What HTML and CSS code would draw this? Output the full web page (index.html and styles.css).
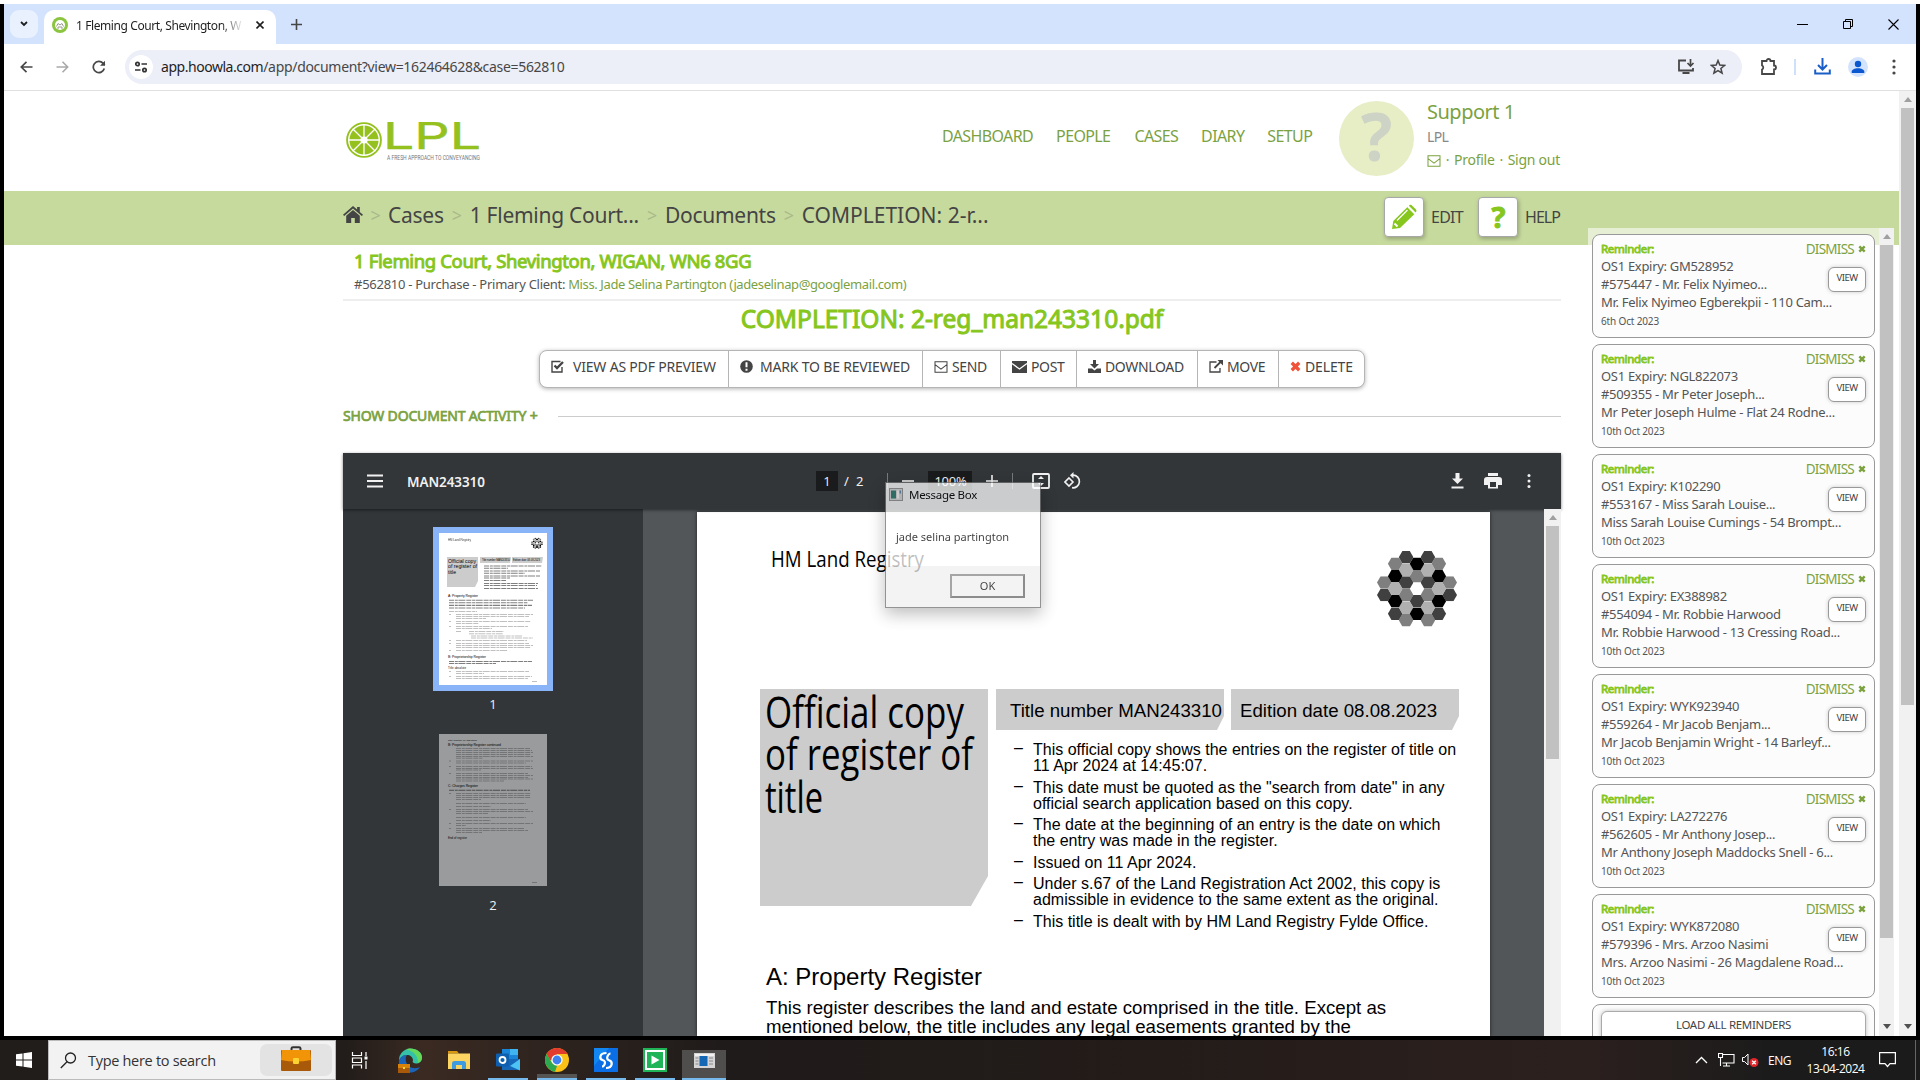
FILE: index.html
```html
<!DOCTYPE html>
<html lang="en">
<head>
<meta charset="utf-8">
<title>1 Fleming Court, Shevington, WIGAN</title>
<link rel="stylesheet" href="styles.css">
</head>
<body>
<svg width="0" height="0" class="defs">
  <symbol id="i-mail" viewBox="0 0 16 14"><path d="M1 1h14v12H1z M1.5 4.5 L8 9.5 L14.500 4.500" fill="none" stroke="currentColor" stroke-width="1.200"/></symbol>
  <symbol id="i-x" viewBox="0 0 8 8"><path d="M1.300 1.300L6.700 6.700M6.700 1.300L1.300 6.700" stroke="currentColor" stroke-width="2.400" fill="none"/></symbol>
  <symbol id="hex" viewBox="0 0 14.600 12.600"><path d="M3.600 0h7.400l3.600 6.300-3.600 6.300H3.600L0 6.300z"/></symbol>
  <symbol id="crest" viewBox="0 0 80 76">
    <g fill="#7f7f7f"><use href="#hex" x="0" y="25.200" width="14.600" height="12.600"/><use href="#hex" x="10.900" y="6.400" width="14.600" height="12.600"/><use href="#hex" x="21.800" y="37.700" width="14.600" height="12.600"/><use href="#hex" x="21.800" y="62.900" width="14.600" height="12.600"/><use href="#hex" x="32.700" y="18.900" width="14.600" height="12.600"/><use href="#hex" x="43.600" y="37.700" width="14.600" height="12.600"/><use href="#hex" x="43.600" y="62.900" width="14.600" height="12.600"/><use href="#hex" x="54.500" y="6.400" width="14.600" height="12.600"/><use href="#hex" x="65.400" y="25.200" width="14.600" height="12.600"/></g>
    <g fill="#404040"><use href="#hex" x="0" y="37.700" width="14.600" height="12.600"/><use href="#hex" x="10.900" y="56.500" width="14.600" height="12.600"/><use href="#hex" x="21.800" y="0" width="14.600" height="12.600"/><use href="#hex" x="21.800" y="25.200" width="14.600" height="12.600"/><use href="#hex" x="32.700" y="44" width="14.600" height="12.600"/><use href="#hex" x="43.600" y="0" width="14.600" height="12.600"/><use href="#hex" x="43.600" y="25.200" width="14.600" height="12.600"/><use href="#hex" x="54.500" y="56.500" width="14.600" height="12.600"/><use href="#hex" x="65.400" y="37.700" width="14.600" height="12.600"/></g>
    <g fill="#b0b0b0"><use href="#hex" x="10.900" y="31.500" width="14.600" height="12.600"/><use href="#hex" x="21.800" y="12.600" width="14.600" height="12.600"/><use href="#hex" x="21.800" y="50.300" width="14.600" height="12.600"/><use href="#hex" x="43.600" y="12.600" width="14.600" height="12.600"/><use href="#hex" x="43.600" y="50.300" width="14.600" height="12.600"/><use href="#hex" x="54.500" y="31.500" width="14.600" height="12.600"/></g>
    <g fill="#000"><use href="#hex" x="10.900" y="18.900" width="14.600" height="12.600"/><use href="#hex" x="10.900" y="44" width="14.600" height="12.600"/><use href="#hex" x="32.700" y="6.400" width="14.600" height="12.600"/><use href="#hex" x="32.700" y="56.500" width="14.600" height="12.600"/><use href="#hex" x="54.500" y="18.900" width="14.600" height="12.600"/><use href="#hex" x="54.500" y="44" width="14.600" height="12.600"/></g>
  </symbol>
</svg>

<div class="window">
  <div class="tabstrip">
    <span class="tab-search"><svg width="8" height="6" viewBox="0 0 8 6"><path d="M1 1l3 3 3-3" fill="none" stroke="#1f1f1f" stroke-width="1.800"/></svg></span>
    <div class="tab">
      <svg class="favicon" width="16" height="16" viewBox="0 0 16 16"><circle cx="8" cy="8" r="8" fill="#8bc53f"/><circle cx="8" cy="8" r="5" fill="#fff"/><path d="M4.500 9.500L6 6.500 8 8l2-1.500 1.500 3M6 12V10h4v2" stroke="#9a9a8a" fill="none"/></svg>
      <span class="tab-title">1 Fleming Court, Shevington, W</span>
      <svg class="tab-close" width="8" height="8" viewBox="0 0 8 8"><path d="M.5.5l7 7M7.500.5l-7 7" stroke="#1f1f1f" stroke-width="1.600"/></svg>
    </div>
    <svg class="new-tab" width="11" height="11" viewBox="0 0 11 11"><path d="M5.500 0v11M0 5.500h11" stroke="#444746" stroke-width="1.600"/></svg>
    <div class="win-controls">
      <svg width="11" height="11" viewBox="0 0 11 11"><path d="M0 5.500h11" stroke="#000"/></svg>
      <svg width="10" height="11" viewBox="0 0 10 11"><path d="M.5 2.500h7v7h-7zM2.500 2.500v-2h7v7h-2" fill="none" stroke="#000"/></svg>
      <svg width="11" height="11" viewBox="0 0 11 11"><path d="M.5.5l10 10M10.500.5l-10 10" stroke="#000" stroke-width="1.100"/></svg>
    </div>
  </div>

  <div class="toolbar">
    <svg width="13" height="12" viewBox="0 0 13 12"><path d="M12.500 6H1.500M6.500 .8L1.300 6l5.200 5.200" fill="none" stroke="#474747" stroke-width="1.700"/></svg>
    <svg width="13" height="12" viewBox="0 0 13 12"><path d="M.5 6h11M6.500 .8L11.700 6l-5.200 5.200" fill="none" stroke="#a9a9a9" stroke-width="1.600"/></svg>
    <svg width="14" height="14" viewBox="0 0 14 14"><path d="M12.300 8.500A5.600 5.600 0 1 1 11 3.200L12.800 5" fill="none" stroke="#474747" stroke-width="1.700"/><path d="M13 .8v5H8z" fill="#474747"/></svg>
    <div class="omnibox">
      <span class="site-info"><svg width="14" height="12" viewBox="0 0 14 12"><g fill="none" stroke="#333" stroke-width="1.700"><circle cx="3.500" cy="3" r="1.700"/><path d="M7.500 3H13M1 9h5.500"/><circle cx="10.500" cy="9" r="1.700"/></g></svg></span>
      <span class="url"><b>app.hoowla.com</b><i>/app/document?view=162464628&amp;case=562810</i></span>
      <svg class="ob-install" width="18" height="16" viewBox="0 0 18 16"><path d="M9 1.500H2v10h14V9M5.500 14h7" fill="none" stroke="#474747" stroke-width="1.800"/><path d="M13.500 0v6M10.500 4l3 3 3-3" fill="none" stroke="#474747" stroke-width="1.700"/></svg>
      <svg class="ob-star" width="16" height="16" viewBox="0 0 16 16"><path d="M8 1.600l1.800 4.500 4.800.3-3.700 3.100 1.200 4.700L8 11.600l-4.100 2.600 1.200-4.700L1.400 6.400l4.800-.3z" fill="none" stroke="#474747" stroke-width="1.500"/></svg>
    </div>
    <svg class="t-ext" width="18" height="18" viewBox="0 0 18 18"><path d="M2 3h4.500a2 2 0 0 1 4 0H14v4.500a2 2 0 0 1 0 4V16H2v-4.500a2.200 2.200 0 0 0 0-4z" fill="none" stroke="#474747" stroke-width="1.800"/></svg>
    <span class="t-div"></span>
    <svg class="t-dl" width="17" height="17" viewBox="0 0 17 17"><path d="M8.500 0v11M4 7l4.500 4.500L13 7M1.200 11.500v4h14.600v-4" fill="none" stroke="#1a5fc8" stroke-width="2"/></svg>
    <svg class="t-user" width="20" height="20" viewBox="0 0 20 20"><circle cx="10" cy="10" r="10" fill="#d3e3fd"/><circle cx="10" cy="7" r="3.200" fill="#0b57d0"/><path d="M3.700 16v-1.500c0-2 3-3.300 6.300-3.300s6.300 1.300 6.300 3.300V16z" fill="#0b57d0"/></svg>
    <svg class="t-more" width="4" height="16" viewBox="0 0 4 16"><g fill="#474747"><circle cx="2" cy="2" r="1.600"/><circle cx="2" cy="8" r="1.600"/><circle cx="2" cy="14" r="1.600"/></g></svg>
  </div>

  <div class="page">
    <main class="site">
      <header class="site-head">
        <svg class="logo" width="136" height="42" viewBox="0 0 136 42">
          <circle cx="18" cy="18" r="16.900" fill="#fff" stroke="#95c11f" stroke-width="1.900"/>
          <circle cx="18" cy="18" r="14.600" fill="#95c11f"/>
          <path d="M18 2v32M2 18h32M6.700 6.700l22.600 22.600M29.300 6.700L6.700 29.300" stroke="#fff" stroke-width="1.300"/>
          <circle cx="18" cy="18" r="3.600" fill="#fff"/>
          <text class="logo-name" x="37" y="27" textLength="98" lengthAdjust="spacingAndGlyphs">LPL</text>
          <text class="logo-tag" x="41" y="38" textLength="93" lengthAdjust="spacingAndGlyphs">A FRESH APPROACH TO CONVEYANCING</text>
        </svg>
        <nav class="nav"><a>DASHBOARD</a><a>PEOPLE</a><a>CASES</a><a>DIARY</a><a>SETUP</a></nav>
        <div class="avatar">?</div>
        <div class="account">
          <div class="acc-name">Support 1</div>
          <div class="acc-org">LPL</div>
          <div class="acc-links"><svg width="14" height="12"><use href="#i-mail"/></svg><s>·</s><a>Profile</a><s>·</s><a>Sign out</a></div>
        </div>
      </header>

      <div class="crumbbar">
        <div class="crumbs">
          <svg width="20" height="17" viewBox="0 0 20 17"><path d="M10 0L0 8.800l1.200 1.300L10 2.600l8.800 7.500L20 8.800l-3.200-2.900V1h-2.700v2.500z" fill="#444"/><path d="M10 4L3.200 9.800V17h5v-5h3.600v5h5V9.800z" fill="#444"/></svg>
          <s>&gt;</s><a>Cases</a><s>&gt;</s><a>1 Fleming Court...</a><s>&gt;</s><a>Documents</a><s>&gt;</s><a class="here">COMPLETION: 2-r...</a>
        </div>
        <div class="crumb-actions">
          <span class="sq"><svg width="26" height="26" viewBox="0 0 26 26"><path d="M1 25l1.300-8L16.500 3l7 7L9 24z" fill="#86c61d"/><path d="M17.800 1.800Q19.500 0 21.200 1.700l3.600 3.600q1.400 1.500-.2 3.200z" fill="#86c61d"/><path d="M17 3.200l6.500 6.500M6 16.500L16.500 6" stroke="#fff" stroke-width="1.200"/><path d="M3.500 19.500l3 3" stroke="#fff" stroke-width="2"/></svg></span>
          <b class="lb-edit">EDIT</b>
          <span class="sq q">?</span>
          <b class="lb-help">HELP</b>
        </div>
      </div>

      <section class="content">
        <div class="case">
          <h2>1 Fleming Court, Shevington, WIGAN, WN6 8GG</h2>
          <p><span>#562810 - Purchase - Primary Client:</span> <a>Miss. Jade Selina Partington (jadeselinap@googlemail.com)</a></p>
        </div>
        <h1><span>COMPLETION: 2-reg_man243310.pdf</span></h1>
        <div class="actions">
          <div class="act a1"><svg width="13" height="13" viewBox="0 0 13 13"><path d="M11 7v5H1V1.500h8.500" fill="none" stroke="#444" stroke-width="1.400"/><path d="M3.500 5.500L6 8l6-6" fill="none" stroke="#444" stroke-width="2.400"/></svg><span>VIEW AS PDF PREVIEW</span></div>
          <div class="act a2"><svg width="13" height="13" viewBox="0 0 13 13"><circle cx="6.500" cy="6.500" r="6.300" fill="#444"/><path d="M6.500 2.200v5M6.500 8.800v2" stroke="#fff" stroke-width="2"/></svg><span>MARK TO BE REVIEWED</span></div>
          <div class="act a3"><svg width="14" height="12"><use href="#i-mail"/></svg><span>SEND</span></div>
          <div class="act a4"><svg width="15" height="12" viewBox="0 0 15 12"><path d="M0 0h15v12H0z" fill="#444"/><path d="M0 2.500L7.500 8 15 2.500" fill="none" stroke="#fff" stroke-width="1.300"/></svg><span>POST</span></div>
          <div class="act a5"><svg width="13" height="13" viewBox="0 0 13 13"><path d="M5 0h3v4h3L6.500 8.500 2 4h3z" fill="#444"/><path d="M0 8.500h4l2.500 2L9 8.500h4V13H0z" fill="#444"/></svg><span>DOWNLOAD</span></div>
          <div class="act a6"><svg width="14" height="13" viewBox="0 0 14 13"><path d="M7.500 2H1v10h10V8" fill="none" stroke="#444" stroke-width="1.300"/><path d="M5.500 8L12 1.500" stroke="#444" stroke-width="1.800"/><path d="M8.500 0H14v5.500z" fill="#444"/></svg><span>MOVE</span></div>
          <div class="act a7"><svg class="red" width="11" height="11"><use href="#i-x"/></svg><span>DELETE</span></div>
        </div>
        <div class="activity"><b>SHOW DOCUMENT ACTIVITY +</b><hr></div>

        <div class="viewer">
          <div class="pdfbar">
            <svg class="menu" width="16" height="14" viewBox="0 0 16 14"><path d="M0 1.500h16M0 7h16M0 12.500h16" stroke="#f1f1f1" stroke-width="2"/></svg>
            <strong>MAN243310</strong>
            <span class="pg">1</span><span class="slash">/</span><span class="tot">2</span>
            <i class="vd d1"></i>
            <svg class="minus" width="12" height="12"><path d="M0 6h12" stroke="#f1f1f1" stroke-width="1.600"/></svg>
            <span class="zoom">100%</span>
            <svg class="plus" width="12" height="12"><path d="M0 6h12M6 0v12" stroke="#f1f1f1" stroke-width="1.600"/></svg>
            <i class="vd d2"></i>
            <svg class="fit" width="18" height="16" viewBox="0 0 18 16"><rect x="1" y="1" width="16" height="14" rx="1" fill="none" stroke="#f1f1f1" stroke-width="1.800"/><path d="M9 3l3 3H6zM9 13l3-3H6z" fill="#f1f1f1"/></svg>
            <svg class="rot" width="18" height="18" viewBox="0 0 18 18"><path d="M9 3.200a6.300 6.300 0 1 1-1 12.500" fill="none" stroke="#f1f1f1" stroke-width="1.700"/><path d="M9.500 0v6.400L6 3.200z" fill="#f1f1f1"/><path d="M5 6l4 4-4 4-4-4z" fill="none" stroke="#f1f1f1" stroke-width="1.600"/></svg>
            <svg class="pdl" width="13" height="16" viewBox="0 0 13 16"><path d="M4.500 0h4v5.500H12L6.500 11 1 5.500h3.500zM.5 13.500h12v2H.5z" fill="#f1f1f1"/></svg>
            <svg class="prn" width="18" height="16" viewBox="0 0 18 16"><path d="M4 0h10v3H4zM3 4h12a3 3 0 0 1 3 3v5h-4v3.500H4V12H0V7a3 3 0 0 1 3-3z" fill="#f1f1f1"/><path d="M6 9h6v5H6z" fill="#323639"/></svg>
            <svg class="pmore" width="4" height="16" viewBox="0 0 4 16"><g fill="#f1f1f1"><circle cx="2" cy="2.500" r="1.500"/><circle cx="2" cy="8" r="1.500"/><circle cx="2" cy="13.500" r="1.500"/></g></svg>
          </div>
          <div class="pdfbody">
            <aside class="thumbs">
              <svg class="thumb on" width="108" height="152" viewBox="0 0 108 152">
                <rect width="108" height="152" fill="#fff"/>
                <text x="9" y="8" font-size="3.400" textLength="23" lengthAdjust="spacingAndGlyphs" opacity=".8">HM Land Registry</text>
                <use href="#crest" x="92" y="4.500" width="12" height="11.500"/>
                <path d="M8 24h31v24l-3 6H8z" fill="#ccc"/><path d="M41 24h31l-1 6H41zM73 24h31l-1 6H73z" fill="#ccc"/>
                <g font-size="5.600"><text x="9" y="29.500" textLength="28" lengthAdjust="spacingAndGlyphs">Official copy</text><text x="9" y="35.300" textLength="29" lengthAdjust="spacingAndGlyphs">of register of</text><text x="9" y="41" textLength="8" lengthAdjust="spacingAndGlyphs">title</text></g>
                <g font-size="2.600"><text x="43" y="28.200" textLength="28">Title number MAN243310</text><text x="74" y="28.200" textLength="27">Edition date 08.08.2023</text></g>
                <g class="greek"><path d="M45 33h58M45 35.300h24M45 38h56M45 40.200h41M45 43h56M45 45h26M45 47.500h22M45 50.500h54M45 52.500h53M45 55.500h54"/></g>
                <text x="9" y="64" font-size="3.400" textLength="30">A: Property Register</text>
                <g class="greek"><path d="M10 67.200h84M10 69.800h79M10 72.400h83M10 75h76"/></g>
                <g class="greek lt"><path d="M10 78.500h28M10 81.500h2M17 81.500h77M17 83.500h73M17 85.500h30M10 88.500h2M17 88.500h75M17 90.500h23M10 93.500h2M17 93.500h72M17 95.500h36M17 98.500h5M30 98.500h35M30 100.800h34M32 103h52M32 105h62M10 107.500h2M17 107.500h71M10 110.500h2M17 110.500h73M17 112.500h77M17 114.500h75M10 117.500h2M17 117.500h52"/></g>
                <text x="9" y="125" font-size="3.400" textLength="38">B: Proprietorship Register</text>
                <g class="greek"><path d="M10 128.500h83M10 130.500h47"/></g>
                <text x="9" y="136.200" font-size="2.800" textLength="18">Title absolute</text>
                <g class="greek lt"><path d="M10 138.500h2M17 138.500h73M17 140.500h28M10 143.500h2M17 143.500h76M17 145.500h72M93 148.500h5"/></g>
              </svg>
              <span class="tn">1</span>
              <svg class="thumb" width="108" height="152" viewBox="0 0 108 152">
                <rect width="108" height="152" fill="#999b9c"/>
                <text x="9" y="7" font-size="2.500" textLength="29">Title number MAN243310</text>
                <text x="9" y="12" font-size="3.400" textLength="53">B: Proprietorship Register continued</text>
                <g class="greek lt"><path d="M17 14.500h74M17 16.500h76M17 18.500h77M17 20.500h75M17 22.500h77M17 24.200h27M10 27h2M17 27h77M17 29h70M10 32.500h2M17 32.500h76M17 34.500h77M17 36h25M10 39.500h2M17 39.500h72M17 41.500h77M17 43.500h72M17 45h77M17 47h48"/></g>
                <text x="9" y="53" font-size="3.400" textLength="30">C: Charges Register</text>
                <g class="greek"><path d="M10 56.200h81"/></g>
                <g class="greek lt"><path d="M10 59.500h2M17 59.500h75M17 61.500h74M17 63.500h75M17 65.500h25M17 69.500h70M17 72.500h35M10 75.500h2M17 75.500h72M17 77.500h77M17 79.500h32M17 83.500h70M17 86.500h35M10 89.500h2M17 89.500h77M17 91.500h10M10 94.500h2M17 94.500h68M17 96.500h72M17 98.500h26M93 148.500h5"/></g>
                <text x="9" y="105" font-size="2.800" textLength="19">End of register</text>
              </svg>
              <span class="tn">2</span>
            </aside>
            <div class="canvas">
              <div class="sheet">
                <div class="sheet-top">
                  <svg class="hmlr" width="160" height="30" viewBox="0 0 160 30"><text x="0" y="21" textLength="153" lengthAdjust="spacingAndGlyphs">HM Land Registry</text></svg>
                  <svg class="crest" width="80" height="76"><use href="#crest"/></svg>
                </div>
                <div class="sheet-title">
                  <svg class="bigtitle" width="228" height="217" viewBox="0 0 228 217"><path d="M0 0h228v187l-17 30H0z" fill="#ccc"/>
                    <text x="5" y="39" textLength="199" lengthAdjust="spacingAndGlyphs">Official copy</text>
                    <text x="5" y="81" textLength="208" lengthAdjust="spacingAndGlyphs">of register of</text>
                    <text x="5" y="123.500" textLength="58" lengthAdjust="spacingAndGlyphs">title</text></svg>
                  <div class="facts">
                    <div class="tags"><div class="tag"><span>Title number MAN243310</span></div><div class="tag edition"><span>Edition date 08.08.2023</span></div></div>
                    <ul>
                      <li>This official copy shows the entries on the register of title on<br>11 Apr 2024 at 14:45:07.</li>
                      <li>This date must be quoted as the "search from date" in any<br>official search application based on this copy.</li>
                      <li>The date at the beginning of an entry is the date on which<br>the entry was made in the register.</li>
                      <li>Issued on 11 Apr 2024.</li>
                      <li>Under s.67 of the Land Registration Act 2002, this copy is<br>admissible in evidence to the same extent as the original.</li>
                      <li>This title is dealt with by HM Land Registry Fylde Office.</li>
                    </ul>
                  </div>
                </div>
                <h3>A: Property Register</h3>
                <p>This register describes the land and estate comprised in the title. Except as<br>mentioned below, the title includes any legal easements granted by the</p>
              </div>
              <div class="sbar vs"><i class="up"></i><i class="knob"></i></div>
            </div>
          </div>
        </div>
      </section>
    </main>
    <div class="sbar ps"><i class="up"></i><i class="knob"></i><i class="down"></i></div>

    <aside class="reminders">
      <div class="cards">
        <div class="card"><div class="r1"><b>Reminder:</b><a>DISMISS</a><svg width="8" height="8"><use href="#i-x"/></svg></div><button>VIEW</button><p>OS1 Expiry: GM528952</p><p>#575447 - Mr. Felix Nyimeo...</p><p>Mr. Felix Nyimeo Egberekpii - 110 Cam...</p><small>6th Oct 2023</small></div>
        <div class="card"><div class="r1"><b>Reminder:</b><a>DISMISS</a><svg width="8" height="8"><use href="#i-x"/></svg></div><button>VIEW</button><p>OS1 Expiry: NGL822073</p><p>#509355 - Mr Peter Joseph...</p><p>Mr Peter Joseph Hulme - Flat 24 Rodne...</p><small>10th Oct 2023</small></div>
        <div class="card"><div class="r1"><b>Reminder:</b><a>DISMISS</a><svg width="8" height="8"><use href="#i-x"/></svg></div><button>VIEW</button><p>OS1 Expiry: K102290</p><p>#553167 - Miss Sarah Louise...</p><p>Miss Sarah Louise Cumings - 54 Brompt...</p><small>10th Oct 2023</small></div>
        <div class="card"><div class="r1"><b>Reminder:</b><a>DISMISS</a><svg width="8" height="8"><use href="#i-x"/></svg></div><button>VIEW</button><p>OS1 Expiry: EX388982</p><p>#554094 - Mr. Robbie Harwood</p><p>Mr. Robbie Harwood - 13 Cressing Road...</p><small>10th Oct 2023</small></div>
        <div class="card"><div class="r1"><b>Reminder:</b><a>DISMISS</a><svg width="8" height="8"><use href="#i-x"/></svg></div><button>VIEW</button><p>OS1 Expiry: WYK923940</p><p>#559264 - Mr Jacob Benjam...</p><p>Mr Jacob Benjamin Wright - 14 Barleyf...</p><small>10th Oct 2023</small></div>
        <div class="card"><div class="r1"><b>Reminder:</b><a>DISMISS</a><svg width="8" height="8"><use href="#i-x"/></svg></div><button>VIEW</button><p>OS1 Expiry: LA272276</p><p>#562605 - Mr Anthony Josep...</p><p>Mr Anthony Joseph Maddocks Snell - 6...</p><small>10th Oct 2023</small></div>
        <div class="card"><div class="r1"><b>Reminder:</b><a>DISMISS</a><svg width="8" height="8"><use href="#i-x"/></svg></div><button>VIEW</button><p>OS1 Expiry: WYK872080</p><p>#579396 - Mrs. Arzoo Nasimi</p><p>Mrs. Arzoo Nasimi - 26 Magdalene Road...</p><small>10th Oct 2023</small></div>
        <div class="card loadall"><div class="loadbtn">LOAD ALL REMINDERS</div></div>
      </div>
      <div class="sbar rs"><i class="up"></i><i class="knob"></i><i class="down"></i></div>
    </aside>
  </div>
</div>

<div class="msgbox">
  <div class="mb-title"><svg width="14" height="13" viewBox="0 0 14 13"><rect x=".5" y=".5" width="13" height="12" fill="#ddd" stroke="#999"/><path d="M2 2.500h5v8H2z" fill="#2f7f72"/><path d="M8 2.500h2v8H8z" fill="#fff"/><path d="M10.500 2.500h1.500v3h-1.500z" fill="#68a"/></svg><span>Message Box</span></div>
  <div class="mb-body"><span>jade selina partington</span></div>
  <div class="mb-foot"><span class="mb-ok">OK</span></div>
</div>

<div class="taskbar">
  <svg class="start" width="16" height="16" viewBox="0 0 16 16"><path d="M0 2.300L6.500 1.400v6.100H0zM7.500 1.200L16 0v7.500H7.500zM0 8.500h6.500v6.100L0 13.700zM7.500 8.500H16V16l-8.500-1.200z" fill="#fff"/></svg>
  <div class="search">
    <svg width="17" height="17" viewBox="0 0 17 17"><circle cx="10.500" cy="6" r="5" fill="none" stroke="#222" stroke-width="1.300"/><path d="M7 9.800L.8 16" stroke="#222" stroke-width="1.300"/></svg>
    <span>Type here to search</span>
    <div class="pill"><svg width="30" height="26" viewBox="0 0 30 26"><path d="M10.500 4V2.500Q10.500 1.200 12 1.200h6q1.500 0 1.500 1.300V4" fill="none" stroke="#333" stroke-width="2"/><rect y="4" width="30" height="21" rx="1" fill="#a85a0a"/><path d="M1 4h28l1 10q-15 3-30 0z" fill="#f29407"/><rect x="12" y="12" width="6" height="6" rx="1" fill="#fbd22f"/></svg></div>
  </div>
  <div class="tb"><svg width="17" height="17" viewBox="0 0 17 17"><path d="M1.500 0v3.500h9V0M1.500 16.500V13h9v3.500M1.500 6h9v4.500h-9zM15 0v4M15 9v8" fill="none" stroke="#fff" stroke-width="1.200"/><path d="M13.500 4.500h3v3h-3z" fill="#fff"/></svg></div>
  <div class="tb"><svg width="24" height="25" viewBox="0 0 24 25"><path d="M1 13A12 11.500 0 0 1 12 .5c7 0 12 4 12 9 0 4-3 6-6 6-3 0-4-1.500-3-3C15 9 12 7 9 7c-4 0-7 3-8 6z" fill="#35c0a8"/><path d="M1 13C2 9 5 7 9 7c-2 2-2 9 3 12 4 2 8 1 10 0-2 3.500-6 5.500-10 5.500C5 24.500 0 19 1 13z" fill="#1b64b8"/><path d="M12 .5c7 0 12 4 12 9 0 3-2 5-4 5.500C20 8 16 3 8 1.200 9 .7 11 .5 12 .5z" fill="#63d85a"/><rect y="16" width="12" height="9" fill="#d9820b"/><path d="M0 20h12v5H0z" fill="#a85a0a"/><path d="M5 19h2v2H5z" fill="#fbd22f"/></svg></div>
  <div class="tb"><svg width="22" height="18" viewBox="0 0 22 18"><path d="M0 0h9l2 2.500h-11z" fill="#d9970f"/><path d="M0 2.500h22V18H0z" fill="#fcd462"/><path d="M4 18v-5.500Q4 10 6.500 10h9q2.500 0 2.500 2.500V18h-4v-4H8v4z" fill="#3f9be0"/></svg></div>
  <div class="tb run"><svg width="24" height="22" viewBox="0 0 24 22"><path d="M6 0h16v13H6z" fill="#1a84d8"/><path d="M14 0h8v6h-8z" fill="#3fb4f0"/><path d="M6 10l18 0v11H6z" fill="#1667b7"/><path d="M24 10L14 17l10 4.500z" fill="#4cc2f5"/><rect y="4.500" width="13" height="13" rx="1" fill="#0f5fb0"/><circle cx="6.500" cy="11" r="3" fill="none" stroke="#fff" stroke-width="1.800"/></svg></div>
  <div class="tb run chromeic"><svg width="24" height="24" viewBox="0 0 24 24"><circle cx="12" cy="12" r="12" fill="#fbc116"/><path d="M1.600 6A12 12 0 0 1 22.400 6H12v6H5z" fill="#e33b2e"/><path d="M1.600 6L7 15l5 3-2 5.850A12 12 0 0 1 1.600 6z" fill="#2da94f"/><circle cx="12" cy="12" r="5.600" fill="#fff"/><circle cx="12" cy="12" r="4.400" fill="#3d82f0"/></svg></div>
  <div class="tb run"><svg width="24" height="24" viewBox="0 0 24 24"><path d="M0 0h24v24H0z" fill="#0a6fe6"/><path d="M0 0h15L0 18z" fill="#1287f2"/><path d="M12.500 5C5 5 5 11 9 12.300S10 18.500 8 18.500M12 20c7 0 7-6.500 3-7.800S14.500 5.500 16.500 5.500" fill="none" stroke="#fff" stroke-width="2.200"/></svg></div>
  <div class="tb run"><svg width="24" height="24" viewBox="0 0 24 24"><path d="M0 0h24v24H0z" fill="#1fb457"/><path d="M3 3h18v18H3z" fill="#1fb457" stroke="#fff" stroke-width="2"/><path d="M8.500 7.500L16.500 12l-8 4.500z" fill="#fff"/></svg></div>
  <div class="tb run cur"><svg width="21" height="15" viewBox="0 0 21 15"><path d="M0 0h21v15H0z" fill="#d5d5d5"/><path d="M1 1h19v2H1z" fill="#f2f2f2"/><path d="M5.500 3h8v10h-8z" fill="#1467b5"/><path d="M1.500 5h3M1.500 8h3M1.500 11h3M15 5h4M15 8h4M15 11h4" stroke="#888"/></svg></div>
  <div class="tray">
    <svg class="tr-more" width="13" height="8" viewBox="0 0 13 8"><path d="M1 7l5.500-5.500L12 7" fill="none" stroke="#fff" stroke-width="1.300"/></svg>
    <svg class="tr-net" width="17" height="14" viewBox="0 0 17 14"><path d="M4.500 1.500h11.500v8.500H4.500M8.500 10v3M5 13h7M.5.5h4v4h-4zM2.500 4.500V13" fill="none" stroke="#fff" stroke-width="1.100"/></svg>
    <svg class="tr-vol" width="17" height="14" viewBox="0 0 17 14"><path d="M.5 4.500h2L6 1v11L2.500 8.500h-2z" fill="none" stroke="#fff"/><circle cx="12" cy="9.500" r="4.500" fill="#e0262c"/><path d="M10.200 7.700l3.600 3.600M13.800 7.700l-3.600 3.600" stroke="#fff" stroke-width="1.300"/></svg>
    <span class="lang">ENG</span>
    <div class="clock"><span>16:16</span><span>13-04-2024</span></div>
    <svg class="tr-note" width="17" height="16" viewBox="0 0 17 16"><path d="M.6.600h15.800v11H11L8.500 14.500 6 11.600H.6z" fill="none" stroke="#fff" stroke-width="1.200"/></svg>
    <i class="desk"></i>
  </div>
</div>
</body>
</html>
```
FILE: styles.css
```css
* { box-sizing: border-box; }
html, body { margin: 0; height: 100%; }
body { width: 1920px; height: 1080px; overflow: hidden; background: #000; font-family: "Noto Sans", "Open Sans", sans-serif; color: #444; position: relative; border-top: 4px solid #fff; }
svg { display: block; flex: none; }
s, i, b, strong { text-decoration: none; font-style: normal; font-weight: 400; }
h1, h2, h3, p, ul, hr { margin: 0; padding: 0; font-weight: 400; }
.defs { position: absolute; }
.window { width: 1912px; height: 1032px; margin-left: 4px; overflow: hidden; display: flex; flex-direction: column; background: #fff; }

/* browser chrome */
.tabstrip { height: 40px; background: #d3e3fd; display: flex; align-items: center; flex: none; }
.tab-search { width: 28px; height: 28px; margin: -1px 6px 0; border-radius: 9px; background: #e9f1fe; display: flex; align-items: center; justify-content: center; }
.tab { width: 232px; height: 34px; align-self: flex-end; background: #fff; border-radius: 10px 10px 0 0; display: flex; align-items: center; padding: 0 12px 4px 8px; }
.tab-title { margin-left: 8px; width: 168px; font-size: 12px; letter-spacing: -.41px; white-space: nowrap; color: #1f1f1f; -webkit-mask-image: linear-gradient(90deg, #000 86%, transparent); mask-image: linear-gradient(90deg, #000 86%, transparent); }
.tab-close { margin-left: auto; }
.new-tab { margin-left: 15px; }
.win-controls { margin-left: auto; display: flex; gap: 35px; padding-right: 17px; }
.toolbar { height: 47px; flex: none; display: flex; align-items: center; padding: 0 0 1px 16px; gap: 23px; border-bottom: 1px solid #e0e0e0; }
.omnibox { width: 1617px; height: 34px; margin-left: -4px; border-radius: 17px; background: #eceef8; display: flex; align-items: center; padding-left: 4px; }
.site-info { width: 24px; height: 24px; border-radius: 50%; background: #fff; display: flex; align-items: center; justify-content: center; }
.url { margin-left: 8px; font-size: 14px; display: flex; }
.url b { color: #1f1f1f; letter-spacing: -.46px; }
.url i { color: #474747; letter-spacing: -.31px; }
.ob-install { margin-left: auto; }
.ob-star { margin: 0 16px 0 15px; }
.t-ext { margin-left: -5px; }
.t-div { width: 2px; height: 16px; background: #cfe0fc; margin-left: -7px; }
.t-dl { margin-left: -5px; }
.t-user { margin-left: -6px; }
.t-more { margin-left: 1px; }

/* site */
.page { height: 945px; position: relative; display: flex; }
.site { width: 1895px; display: flex; flex-direction: column; }
.site-head { height: 100px; padding-left: 342px; display: flex; align-items: flex-start; flex: none; }
.logo { margin-top: 31px; }
.logo-name { font: 400 37px Inter, sans-serif; fill: #95c11f; stroke: #95c11f; stroke-width: .5px; }
.logo-tag { font: 6.500px Roboto, sans-serif; fill: #777; }
.nav { margin: 33px 0 0 460px; width: 397px; display: flex; gap: 23px; font-size: 16px; letter-spacing: -.62px; line-height: 24px; color: #7ba23f; white-space: nowrap; }
.nav a:nth-child(n+3) { position: relative; left: 1px; }
.avatar { width: 75px; height: 75px; margin-top: 10px; border-radius: 50%; background: #e7edc4; color: #cdd3c5; font-weight: 700; font-size: 66px; line-height: 69px; text-align: center; }
.account { margin: 9px 0 0 13px; color: #7ba23f; white-space: nowrap; }
.acc-name { font-size: 20px; line-height: 24px; letter-spacing: -.5px; }
.acc-org { font-size: 14px; line-height: 26px; color: #888; letter-spacing: -.6px; }
.acc-links { display: flex; align-items: center; font-size: 14px; line-height: 20px; letter-spacing: -.25px; }
.acc-links svg { margin-top: 2px; }
.acc-links s { width: 13px; text-align: center; }
.crumbbar { height: 54px; flex: none; background: #c7da9e; padding: 0 339px 0 339px; display: flex; justify-content: space-between; }
.crumbs { display: flex; align-items: center; padding-bottom: 7px; font-size: 21px; letter-spacing: -.27px; line-height: 30px; color: #444; white-space: nowrap; }
.crumbs s { width: 26px; text-align: center; color: #a9b98a; font-size: 18px; }
.crumbs svg + s { width: 25px; }
.crumbs .here { letter-spacing: 0; }
.crumb-actions { display: flex; align-items: flex-start; padding-top: 6px; font-size: 16px; letter-spacing: -.75px; line-height: 40px; color: #444; }
.sq { width: 40px; height: 40px; background: #fff; border: 1px solid #a8a8a8; border-radius: 4px; box-shadow: 1px 2px 4px rgba(0,0,0,.25); display: flex; align-items: center; justify-content: center; }
.q { color: #86c61d; font-size: 29px; font-weight: 700; -webkit-text-stroke: 1px #86c61d; margin-left: 15px; }
.crumb-actions b { margin-left: 7px; }
.lb-edit { width: 32px; }
.lb-help { width: 35px; letter-spacing: -.95px; }

.content { width: 1218px; margin-left: 339px; }
.case { height: 56px; padding: 5px 0 0 11px; border-bottom: 2px solid #eee; white-space: nowrap; }
.case h2 { font-size: 18.500px; line-height: 22px; letter-spacing: -.36px; color: #86c61d; -webkit-text-stroke: .95px #86c61d; }
.case p { margin-top: 1px; font-size: 13px; line-height: 22px; color: #555; display: flex; gap: 3px; letter-spacing: -.27px; }
.case a { color: #7ba23f; letter-spacing: -.39px; }
h1 { font-size: 24.500px; line-height: 36px; text-align: center; color: #86c61d; -webkit-text-stroke: 1px #86c61d; }
.actions { margin: 13px 0 0 196px; width: 826px; height: 38px; border: 1px solid #b5b5b5; border-radius: 8px; box-shadow: 0 1px 4px rgba(0,0,0,.3); display: flex; background: #fff; }
.act { display: flex; align-items: center; padding: 0 0 5px 11px; border-right: 1px solid #b5b5b5; font-size: 14px; line-height: 20px; letter-spacing: -.35px; white-space: nowrap; color: #444; }
.act:last-child { border: 0; letter-spacing: -.15px; }
.act span { margin-left: 4px; }
.a1 { width: 189px; } .a2 { width: 194px; } .a3 { width: 78px; } .a4 { width: 76px; } .a5 { width: 121px; } .a6 { width: 81px; }
.a1, .a2 { letter-spacing: -.19px; }
.act.a1 span { margin-left: 9px; } .act.a2 span { margin-left: 7px; }
.red { color: #f0523a; }
.activity { height: 65px; display: flex; align-items: center; padding-bottom: 10px; color: #7ba23f; font-size: 14px; letter-spacing: -.18px; white-space: nowrap; }
.activity b { -webkit-text-stroke: .7px #7ba23f; width: 215px; }
.activity hr { flex: 1; border: 0; border-top: 1px solid #ccc; margin-top: 1px; }

/* document viewer */
.viewer { width: 1218px; height: 583px; background: #525659; display: flex; flex-direction: column; }
.pdfbar { height: 56px; background: #323639; display: flex; align-items: center; padding-left: 24px; color: #f1f1f1; font-size: 13px; flex: none; position: relative; box-shadow: 0 1px 3px rgba(0,0,0,.5); }
.pdfbar strong { margin-left: 24px; width: 409px; font-weight: 600; font-size: 13.500px; letter-spacing: -.1px; padding-top: 1px; }
.pg { width: 22px; height: 20px; background: #191b1c; text-align: center; line-height: 20px; font-family: "Open Sans", sans-serif; }
.slash { margin-left: 6px; width: 12px; }
.vd { width: 1px; height: 16px; background: #77797b; }
.d1 { margin-left: 24px; } .d2 { margin-left: 14px; }
.minus { margin-left: 14px; }
.zoom { margin-left: 14px; width: 44px; height: 20px; line-height: 20px; background: #191b1c; text-align: center; letter-spacing: -.25px; }
.plus { margin-left: 14px; }
.fit { margin-left: 19px; } .rot { margin-left: 14px; margin-top: -1px; }
.pdl { margin-left: auto; } .prn { margin-left: 20px; } .pmore { margin: 0 30px 0 25px; }
.pdfbody { height: 527px; display: flex; overflow: hidden; }
.thumbs { width: 300px; background: #323639; display: flex; flex-direction: column; align-items: center; color: #f1f1f1; font-size: 13px; font-family: "Open Sans", sans-serif; }
.thumb { margin-top: 10px; font-family: "Liberation Sans", sans-serif; }
.thumb.on { margin-top: 24px; outline: 6px solid #8ab4f8; }
.tn { line-height: 20px; margin-top: 9px; }
.thumb.on + .tn { margin-bottom: 10px; }
.greek { stroke: #000; stroke-width: 1.100; stroke-dasharray: 5 .8 3 .6 7 .9; opacity: .5; fill: none; }
.greek.lt { opacity: .28; stroke-width: .9; }
.canvas { width: 918px; display: flex; justify-content: space-between; overflow: hidden; }
.sheet { margin: 3px 0 0 54px; width: 793px; background: #fff; box-shadow: 0 0 4px rgba(0,0,0,.6); font-family: "Liberation Sans", Arial, sans-serif; color: #000; white-space: nowrap; }
.sheet-top { height: 177px; padding: 34px 33px 0 74px; display: flex; justify-content: space-between; }
.crest { margin-top: 5px; }
.hmlr text { font: 400 22px "Open Sans", sans-serif; }
.sheet-title { display: flex; padding-left: 63px; gap: 8px; height: 261px; }
.bigtitle text { font: 400 43px "Open Sans", sans-serif; }
.tags { display: flex; gap: 7px; }
.tag { width: 228px; height: 41px; background: #ccc; clip-path: polygon(0 0, 100% 0, 100% 27px, 221px 100%, 0 100%); font-size: 18.670px; line-height: 43px; padding-left: 14px; }
.edition { padding-left: 9px; }
.facts ul { list-style: none; padding: 12px 0 0 37px; font-size: 16px; line-height: 16px; }
.facts li { margin-bottom: 5.500px; }
.facts li::before { content: "–"; float: left; margin: -2px 0 0 -19px; }
.sheet h3 { font-size: 24px; line-height: 30px; padding: 4px 0 0 69px; margin-top: 8px; }
.sheet p { padding: 2px 0 0 69px; font-size: 18.670px; line-height: 19px; margin-top: 4px; }

/* scrollbars */
.sbar { background: #f1f1f1; width: 17px; position: relative; display: flex; flex-direction: column; align-items: center; flex: none; }
.sbar .up { border: 4px solid transparent; border-top: 0; border-bottom: 5px solid #a0a0a0; margin: 6px 0; }
.sbar .down { border: 4px solid transparent; border-bottom: 0; border-top: 5px solid #505050; margin: auto 0 7px; }
.sbar .knob { width: 13px; background: #c1c1c1; }
.vs .knob { height: 233px; }
.ps .knob { height: 597px; }
.rs { width: 15px; } .rs .knob { height: 693px; }

/* reminders */
.reminders { position: absolute; left: 1584px; top: 137px; width: 306px; height: 808px; display: flex; overflow: hidden; }
.cards { width: 291px; padding: 6px 4px 0; background: rgba(255,255,255,.55); display: flex; flex-direction: column; gap: 6px; }
.card { flex: none; position: relative; height: 104px; border: 1px solid #999; border-radius: 8px; background: #fcfcfc; padding: 6px 8px 0; font-size: 13px; line-height: 18px; letter-spacing: -.3px; color: #555; white-space: nowrap; }
.r1 { display: flex; align-items: center; line-height: 16px; color: #7ba23f; }
.r1 b { color: #86c61d; -webkit-text-stroke: .8px #86c61d; font-size: 11.500px; margin-right: auto; }
.r1 a { font-size: 13.500px; letter-spacing: -.75px; margin-right: 4px; }
.card button { position: absolute; right: 8px; top: 32px; width: 38px; height: 25px; border: 1px solid #999; border-radius: 6px; background: #fff; box-shadow: 0 0 4px rgba(0,0,0,.2); font: 9.500px/12px "Noto Sans", sans-serif; letter-spacing: -.45px; color: #444; padding: 0 0 3px; }
.card small { display: block; font-size: 10px; line-height: 20px; letter-spacing: -.15px; }
.loadall { height: 60px; }
.loadbtn { height: 40px; border: 1px solid #aaa; border-radius: 6px; background: #fff; box-shadow: 0 0 4px rgba(0,0,0,.25); text-align: center; font-size: 11.500px; line-height: 25px; color: #444; }

/* message box */
.msgbox { position: absolute; left: 885px; top: 478px; width: 156px; height: 126px; opacity: .75; border: 1px solid #707070; background: #fff; box-shadow: 0 6px 16px rgba(0,0,0,.35); font-size: 11.500px; color: #000; display: flex; flex-direction: column; white-space: nowrap; }
.mb-title { height: 22px; display: flex; align-items: center; padding-left: 3px; gap: 6px; letter-spacing: -.3px; }
.mb-body { height: 61px; padding: 23px 0 0 10px; line-height: 18px; font-size: 11px; }
.mb-foot { flex: 1; background: #f0f0f0; display: flex; justify-content: flex-end; padding: 8px 15px 0; }
.mb-ok { width: 75px; height: 24px; border: 2px solid; border-color: #888 #666 #666 #888; text-align: center; font-size: 11px; line-height: 19px; background: #f0f0f0; }

/* taskbar */
.taskbar { margin-top: 4px; height: 40px; background: linear-gradient(90deg, #211d1a 0, #221d1a 18%, #3a2a22 22%, #2b221e 30%, #1f1b1a 38%, #231c19 60%, #2c201e 82%, #1c1b1b 92%); display: flex; align-items: center; color: #fff; font-family: "Open Sans", sans-serif; }
.start { margin: 0 16px; }
.search { width: 288px; height: 40px; background: #f2f2f2; border: 1px solid #bbb; display: flex; align-items: center; color: #333; font-size: 14.500px; letter-spacing: -.3px; padding-left: 11px; white-space: nowrap; }
.search span { margin-left: 11px; }
.pill { margin: 0 3px 0 auto; width: 72px; height: 32px; border-radius: 7px; background: #e3e3e3; display: flex; align-items: center; justify-content: center; padding-bottom: 2px; }
.tb { width: 49px; height: 40px; display: flex; align-items: center; justify-content: center; background: no-repeat center bottom / 40px 2px; }
.search + .tb { width: 49px; padding-right: 2px; }
.run { background-image: linear-gradient(#76b9ed, #76b9ed); }
.chromeic { background-image: linear-gradient(#76b9ed, #76b9ed), linear-gradient(#555, #555); background-size: 40px 2px, 40px 6px; background-position: center bottom; }
.cur { width: 44px; height: 30px; align-self: flex-end; margin-left: 3px; background-color: #504e4c; background-size: 44px 2px; padding-bottom: 10px; }
.tray { margin-left: auto; display: flex; align-items: center; font-size: 12px; letter-spacing: -.46px; height: 40px; }
.tr-net { margin-left: 10px; } .tr-vol { margin-left: 7px; }
.lang { margin-left: 9px; width: 24px; }
.clock { width: 87px; text-align: center; display: flex; flex-direction: column; line-height: 17px; align-items: center; padding-bottom: 1px; }
.tr-note { margin-right: 19px; }
.desk { width: 1px; height: 40px; background: #666; margin-right: 4px; }
```
